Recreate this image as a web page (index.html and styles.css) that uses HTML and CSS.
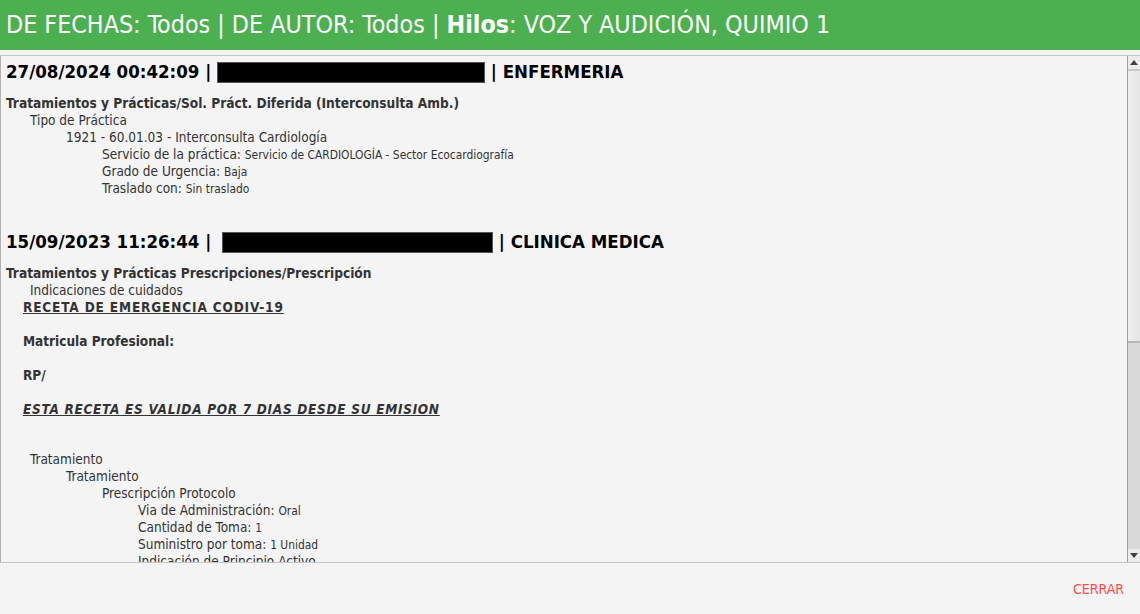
FILE: index.html
```html
<!DOCTYPE html>
<html lang="es">
<head>
<meta charset="utf-8">
<title>Historia</title>
<link rel="stylesheet" href="styles.css">
</head>
<body>
<header class="topbar">DE FECHAS: Todos | DE AUTOR: Todos | <b>Hilos</b>: VOZ Y AUDICIÓN, QUIMIO 1</header>
<div class="gap"></div>
<main class="viewer">
  <div class="scroll">
    <section class="entry">
      <h2 class="entry-title">27/08/2024 00:42:09 | <span class="redact r1"></span> | ENFERMERIA</h2>
      <div class="group">Tratamientos y Prácticas/Sol. Práct. Diferida (Interconsulta Amb.)</div>
      <div class="ln i1">Tipo de Práctica</div>
      <div class="ln i2">1921 - 60.01.03 - Interconsulta Cardiología</div>
      <div class="ln i3">Servicio de la práctica: <span class="val">Servicio de CARDIOLOGÍA - Sector Ecocardiografía</span></div>
      <div class="ln i3">Grado de Urgencia: <span class="val">Baja</span></div>
      <div class="ln i3">Traslado con: <span class="val">Sin traslado</span></div>
    </section>
    <section class="entry second">
      <h2 class="entry-title">15/09/2023 11:26:44 | <span class="redact r2"></span> | CLINICA MEDICA</h2>
      <div class="group">Tratamientos y Prácticas Prescripciones/Prescripción</div>
      <div class="ln i1">Indicaciones de cuidados</div>
      <div class="ln rx bold under caps">RECETA DE EMERGENCIA CODIV-19</div>
      <div class="ln blank"></div>
      <div class="ln rx bold">Matricula Profesional:</div>
      <div class="ln blank"></div>
      <div class="ln rx bold">RP/</div>
      <div class="ln blank"></div>
      <div class="ln rx bold under ital caps-it">ESTA RECETA ES VALIDA POR 7 DIAS DESDE SU EMISION</div>
      <div class="ln blank"></div>
      <div class="ln blank short"></div>
      <div class="ln i1">Tratamiento</div>
      <div class="ln i2">Tratamiento</div>
      <div class="ln i3">Prescripción Protocolo</div>
      <div class="ln i4">Via de Administración: <span class="val">Oral</span></div>
      <div class="ln i4">Cantidad de Toma: <span class="val">1</span></div>
      <div class="ln i4">Suministro por toma: <span class="val">1 Unidad</span></div>
      <div class="ln i4">Indicación de Principio Activo</div>
    </section>
  </div>
  <div class="sbar">
    <div class="sbtn"><span class="tri up"></span></div>
    <div class="thumb"></div>
    <div class="track"></div>
    <div class="sbtn"><span class="tri down"></span></div>
  </div>
</main>
<footer class="actions"><button class="close">CERRAR</button></footer>
</body>
</html>
```
FILE: styles.css
```css
* { box-sizing: border-box; }
html, body { margin: 0; padding: 0; }
body {
  width: 1140px;
  height: 614px;
  overflow: hidden;
  background: #f4f4f4;
  font-family: "DejaVu Sans Condensed", "DejaVu Sans", sans-serif;
  display: flex;
  flex-direction: column;
}
.topbar {
  height: 50px;
  background: #4caf50;
  color: #fff;
  font-size: 24.8px;
  line-height: 50px;
  padding-left: 6px;
  white-space: nowrap;
}
.topbar b { font-weight: bold; }
.gap { height: 5px; background: #f4f4f4; }
.viewer {
  height: 508px;
  display: flex;
  border-top: 1px solid #c6c6c6;
  border-bottom: 1px solid #c6c6c6;
  border-left: 1px solid #b0b0b0;
}
.scroll {
  flex: 1;
  overflow: hidden;
  padding: 4px 0 0 5px;
  color: #333;
}
.entry-title {
  margin: 0;
  font-size: 18.5px;
  font-weight: bold;
  color: #000;
  height: 24px;
  line-height: 24px;
  display: flex;
  align-items: center;
  white-space: pre;
}
.redact {
  display: inline-block;
  background: #000;
  height: 21px;
  border: 1px solid #555;
}
.r1 { width: 268px; }
.r2 { width: 271px; margin-left: 5px; }
.group {
  margin-top: 11px;
  font-size: 13.6px;
  font-weight: bold;
  line-height: 17px;
  height: 17px;
  white-space: nowrap;
}
.ln {
  font-size: 13.5px;
  line-height: 17px;
  height: 17px;
  white-space: nowrap;
}
.val { font-size: 11.9px; }
.i1 { padding-left: 24px; }
.i2 { padding-left: 60px; }
.i3 { padding-left: 96px; }
.i4 { padding-left: 132px; }
.rx { padding-left: 17px; }
.bold { font-weight: bold; }
.under { text-decoration: underline; }
.ital { font-style: italic; }
.caps { letter-spacing: 0.85px; }
.caps-it { letter-spacing: 0.7px; }
.short { height: 16px; }
.second { margin-top: 33px; }
.sbar {
  width: 13px;
  display: flex;
  flex-direction: column;
  border-left: 1px solid #a0a0a0;
  background: #e8e8e8;
}
.sbtn {
  height: 13px;
  display: flex;
  align-items: center;
  justify-content: center;
  background: #ececec;
}
.thumb {
  height: 274px;
  background: linear-gradient(to right, #f0f0f0, #e4e4e4);
  border-top: 2px solid #c8c8c8;
  border-bottom: 2px solid #b8b8b8;
}
.track { flex: 1; background: #dadada; }
.tri { width: 0; height: 0; border-left: 4px solid transparent; border-right: 4px solid transparent; }
.tri.up { border-bottom: 5px solid #404040; }
.tri.down { border-top: 5px solid #404040; }
.actions {
  flex: 1;
  display: flex;
  justify-content: flex-end;
  align-items: center;
  padding-right: 16px;
}
.close {
  background: none;
  border: none;
  padding: 0;
  font-family: inherit;
  font-size: 14px;
  color: #ff4b4b;
}
```
